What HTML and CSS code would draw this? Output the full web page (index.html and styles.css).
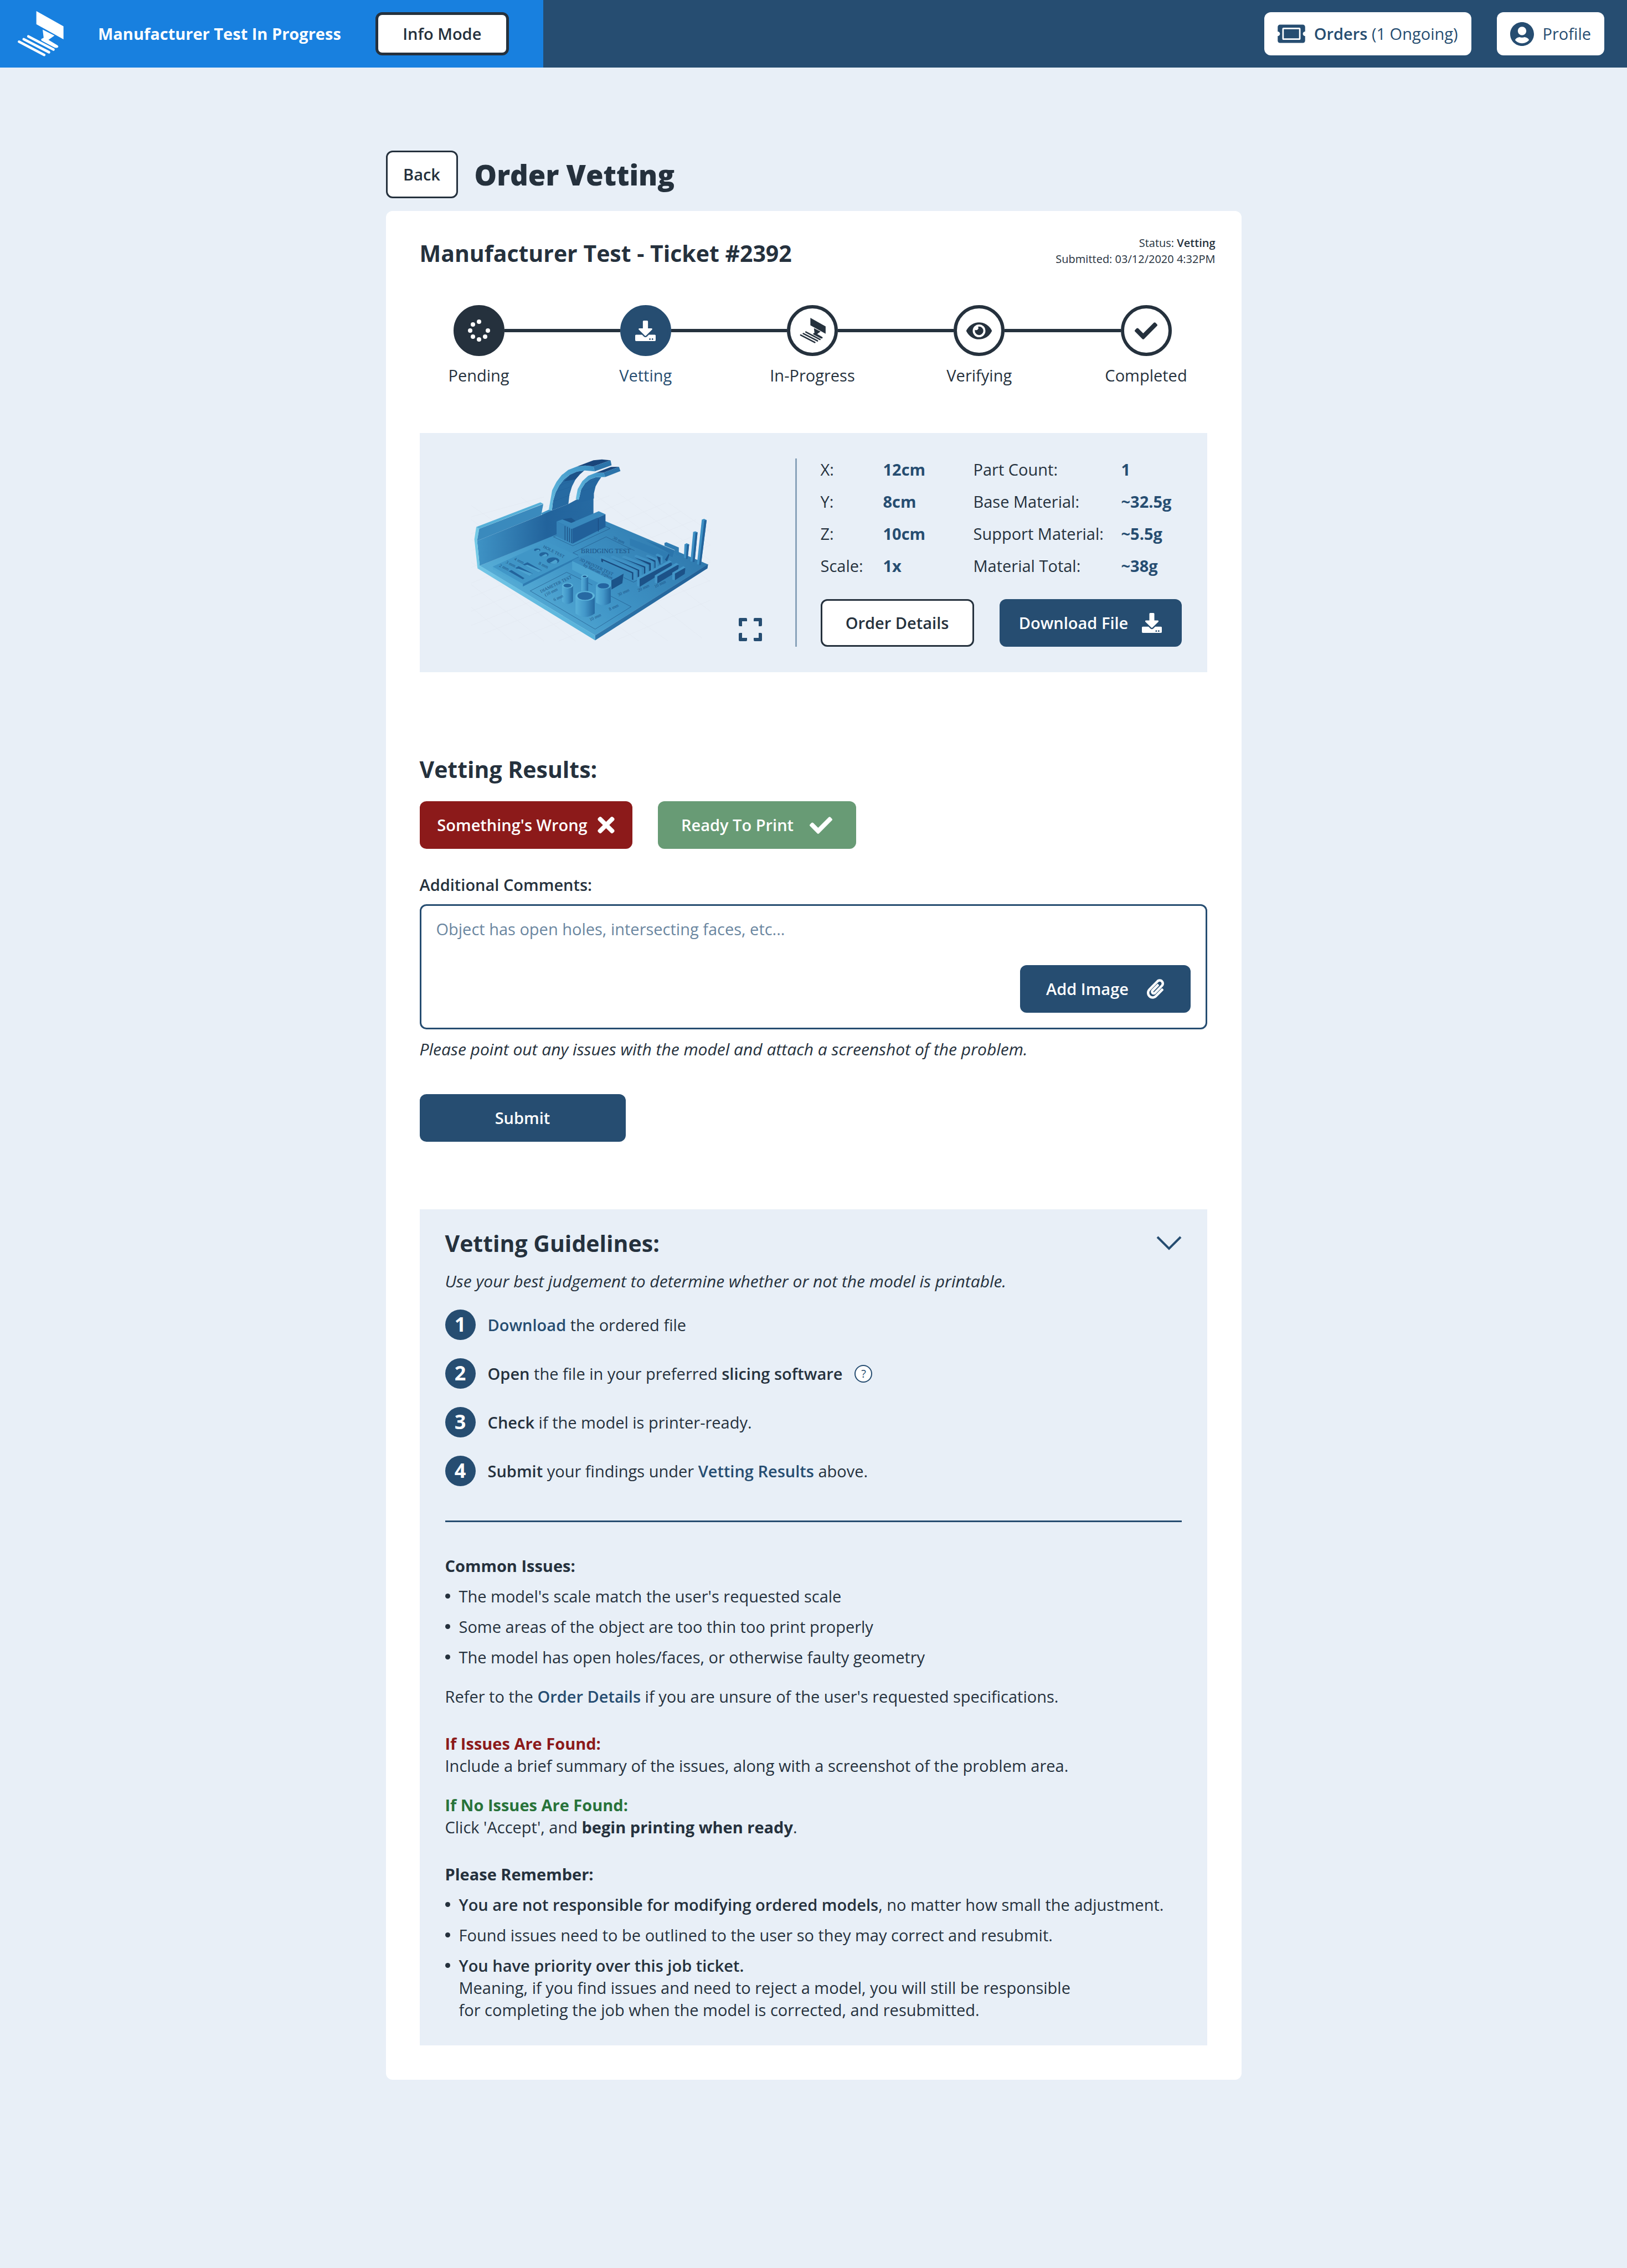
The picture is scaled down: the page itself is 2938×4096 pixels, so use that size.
FILE: index.html
```
<!DOCTYPE html>
<html lang="en">
<head>
<meta charset="utf-8">
<meta name="viewport" content="width=device-width, initial-scale=1">
<title>Order Vetting</title>
<link rel="stylesheet" href="styles.css">
</head>
<body>
<svg class="sprite" aria-hidden="true">
  <symbol id="logo" viewBox="62 40 330 323">
    <path d="M198 40L391 148V241L198 134Z"/>
    <path d="M243 172L327 214L284 245L348 283Q358 291 352 298Q342 304 328 300L238 252Q229 246 234 238L250 230Z"/>
    <g fill="none" stroke="currentColor" stroke-width="18" stroke-linecap="round"><path d="M141 220L320 314"/><path d="M108 240L288 333"/><path d="M75 258L254 352"/></g>
  </symbol>
  <symbol id="download" viewBox="0 0 512 512"><path d="M216 0h80c13.3 0 24 10.7 24 24v168h87.7c17.8 0 26.7 21.5 14.1 34.1L269.7 378.3c-7.5 7.5-19.8 7.5-27.3 0L90.1 226.1c-12.6-12.6-3.7-34.1 14.1-34.1H192V24c0-13.3 10.7-24 24-24zm296 376v112c0 13.3-10.7 24-24 24H24c-13.3 0-24-10.7-24-24V376c0-13.3 10.7-24 24-24h146.7l49 49c20.1 20.1 52.5 20.1 72.6 0l49-49H488c13.3 0 24 10.7 24 24zm-124 88c0-11-9-20-20-20s-20 9-20 20 9 20 20 20 20-9 20-20zm64 0c0-11-9-20-20-20s-20 9-20 20 9 20 20 20 20-9 20-20z"/></symbol>
  <symbol id="check" viewBox="0 0 512 512"><path d="M173.898 439.404l-166.4-166.4c-9.997-9.997-9.997-26.206 0-36.204l36.203-36.204c9.997-9.998 26.207-9.998 36.204 0L192 312.69 432.095 72.596c9.997-9.997 26.207-9.997 36.204 0l36.203 36.204c9.997 9.997 9.997 26.206 0 36.204l-294.4 294.401c-9.998 9.997-26.207 9.997-36.204-.001z"/></symbol>
</svg>

<header class="topbar">
  <div class="mode">
    <svg class="mode-logo" aria-hidden="true"><use href="#logo"/></svg>
    <span class="mode-title">Manufacturer Test In Progress</span>
    <button class="mode-button" type="button">Info Mode</button>
  </div>
  <nav class="account">
    <a class="nav-link" href="#orders">
      <svg class="ticket-icon" viewBox="0 0 576 512" aria-hidden="true"><path d="M128 160h320v192H128V160zm400 96c0 26.51 21.49 48 48 48v96c0 26.51-21.49 48-48 48H48c-26.51 0-48-21.49-48-48v-96c26.51 0 48-21.49 48-48s-21.49-48-48-48v-96c0-26.51 21.49-48 48-48h480c26.51 0 48 21.49 48 48v96c-26.51 0-48 21.49-48 48zm-48-104c0-13.255-10.745-24-24-24H120c-13.255 0-24 10.745-24 24v208c0 13.255 10.745 24 24 24h336c13.255 0 24-10.745 24-24V152z"/></svg>
      <span><b>Orders</b> (1 Ongoing)</span>
    </a>
    <a class="nav-link" href="#profile">
      <svg class="user-icon" viewBox="0 8 496 496" aria-hidden="true"><path d="M248 8C111 8 0 119 0 256s111 248 248 248 248-111 248-248S385 8 248 8zm0 96c48.6 0 88 39.4 88 88s-39.4 88-88 88-88-39.4-88-88 39.4-88 88-88zm0 344c-58.7 0-111.3-26.6-146.5-68.2 18.8-35.4 55.6-59.8 98.5-59.8 2.4 0 4.8.4 7.1 1.1 13 4.2 26.6 6.9 40.9 6.9 14.3 0 28-2.7 40.9-6.9 2.3-.7 4.7-1.1 7.1-1.1 42.9 0 79.7 24.4 98.5 59.8C359.3 421.4 306.7 448 248 448z"/></svg>
      <span>Profile</span>
    </a>
  </nav>
</header>

<main class="page">
  <div class="page-head">
    <button class="button outline back" type="button">Back</button>
    <h1>Order Vetting</h1>
  </div>

  <article class="card">
    <header class="ticket-head">
      <h2>Manufacturer Test - Ticket #2392</h2>
      <p class="ticket-meta">Status: <b>Vetting</b><br>Submitted: 03/12/2020 4:32PM</p>
    </header>

    <ol class="steps">
      <li class="step done">
        <span class="dot"><svg width="42" height="42" viewBox="-21 -21 42 42" aria-hidden="true"><circle cy="-16" r="4"/><circle cx="-11" cy="-11" r="4"/><circle cx="-16" r="4"/><circle cx="-11" cy="11" r="4"/><circle cy="16" r="4"/><circle cx="11" cy="11" r="4"/><circle cx="16" r="4"/></svg></span>
        <span class="step-name">Pending</span>
      </li>
      <li class="step current" aria-current="step">
        <span class="dot"><svg width="37" height="37" aria-hidden="true"><use href="#download"/></svg></span>
        <span class="step-name">Vetting</span>
      </li>
      <li class="step">
        <span class="dot"><svg width="47" height="46" aria-hidden="true"><use href="#logo"/></svg></span>
        <span class="step-name">In-Progress</span>
      </li>
      <li class="step">
        <span class="dot"><svg width="46" height="41" viewBox="0 0 576 512" aria-hidden="true"><path d="M572.52 241.4C518.29 135.59 410.93 64 288 64S57.68 135.64 3.48 241.41a32.35 32.35 0 0 0 0 29.19C57.71 376.41 165.07 448 288 448s230.32-71.64 284.52-177.41a32.35 32.35 0 0 0 0-29.19zM288 400a144 144 0 1 1 144-144 143.93 143.93 0 0 1-144 144zm0-240a95.31 95.31 0 0 0-25.31 3.79 47.85 47.85 0 0 1-66.9 66.9A95.78 95.78 0 1 0 288 160z"/></svg></span>
        <span class="step-name">Verifying</span>
      </li>
      <li class="step">
        <span class="dot"><svg width="41" height="41" aria-hidden="true"><use href="#check"/></svg></span>
        <span class="step-name">Completed</span>
      </li>
    </ol>

    <section class="model">
      <div class="preview">
        <svg class="model-view" viewBox="0 0 438 332" role="img" aria-label="3D model of the ordered part">
          <defs>
            <linearGradient id="gBase" x1="0" y1="0.7" x2="1" y2="0.2"><stop offset="0" stop-color="#5fb6dc"/><stop offset=".45" stop-color="#3f94c6"/><stop offset="1" stop-color="#2d75aa"/></linearGradient>
            <linearGradient id="gWall" x1="0" y1="0" x2="1" y2="0"><stop offset="0" stop-color="#3f93c5"/><stop offset=".6" stop-color="#22639c"/><stop offset="1" stop-color="#266aa2"/></linearGradient>
            <linearGradient id="gArc" x1="0" y1="1" x2="1" y2="0"><stop offset="0" stop-color="#66bde1"/><stop offset="1" stop-color="#3a8fc3"/></linearGradient>
            <linearGradient id="gTube" x1="0" y1="0" x2="1" y2="0"><stop offset="0" stop-color="#58b0d9"/><stop offset=".5" stop-color="#4296c8"/><stop offset="1" stop-color="#2468a0"/></linearGradient>
            <linearGradient id="gEdge" x1="0" y1="0" x2="1" y2="1"><stop offset="0" stop-color="#72c6e6"/><stop offset="1" stop-color="#55b0d9"/></linearGradient>
            <linearGradient id="gSide" x1="0" y1="1" x2="1" y2="0"><stop offset="0" stop-color="#2e78ad"/><stop offset="1" stop-color="#215f96"/></linearGradient>
          </defs>
          <g transform="scale(.3806 .255) translate(-100 -127)">
            <g fill="none" stroke="#dfe4ee" stroke-width="2" opacity=".55">
              <path d="M105 1010L1030 440M105 1110L1100 500M105 1210L1170 560M105 1310L1240 630M160 1370L1240 740M330 1400L1240 860M520 1420L1240 990M800 1410L1240 1130M105 900L880 400M105 780L760 390M105 660L620 380M105 540L450 400"/>
              <path d="M105 560L900 1420M105 700L760 1420M105 860L600 1420M105 1020L450 1420M105 1180L300 1420M105 460L1040 1420M340 400L1200 1400M520 380L1240 1210M680 370L1240 1000M800 370L1240 850M920 400L1240 740M1040 440L1240 650"/>
            </g>
            <path fill="url(#gBase)" d="M145 887L700 545L1228 877L693 1380Z"/>
            <path fill="url(#gEdge)" d="M135 905L145 885L693 1380V1415Z"/>
            <path fill="url(#gSide)" d="M693 1380L1229 875L1226 905L693 1415Z"/>

            <path fill="url(#gWall)" d="M145 887L133 710L437 528L475 497L488 495L566 450L602 420L685 375V545L510 665Z"/>
            <path fill="#74cae6" d="M129 612L143 625L133 710L145 887L135 905L120 700Z"/>
            <path fill="#3a8abd" d="M143 625L447 450L437 528L133 710Z"/>
            <path fill="#56b0d8" d="M129 612L433 438L447 448L143 625Z"/>
            <path fill="#3f93c5" d="M437 514L473 490L488 495L440 526Z"/>
            <path fill="#266aa2" d="M488 495L493 430L505 370L522 320L545 275L573 243L607 220L640 213L620 240L600 275L583 325L571 385L566 450Z"/>
            <path fill="#1c5288" d="M573 243L607 220L640 213L620 240L600 275L545 290Z"/>
            <path fill="url(#gArc)" d="M473 490L489 352L510 292L534 245L565 208L607 184L645 177L685 183L691 218L645 212L607 220L573 243L545 275L522 320L505 370L493 430L488 495Z"/>
            <path fill="#19457a" d="M607 184L685 140L725 134L766 140L685 183L645 177Z"/>
            <path fill="#2c74aa" d="M685 183L766 140L771 175L691 218Z"/>
            <path fill="#2467a0" d="M615 420L627 345L645 303L668 275L697 259L722 259L708 290L695 325L687 375V410L610 440Z"/>
            <path fill="url(#gArc)" d="M601 415L610 345L632 288L660 250L697 228L733 227L741 258L697 259L668 275L645 303L627 345L615 420Z"/>
            <path fill="#19457a" d="M697 228L768 187L806 186L733 227Z"/>
            <path fill="#2c74aa" d="M733 227L806 186L813 216L741 258Z"/>
            <g stroke="#1c5a92" stroke-width="1" fill="none"><path d="M497 430L575 385M508 362L583 325M524 318L600 275M625 362L690 330M645 305L708 280"/></g>

            <path fill="none" stroke="#1d5184" stroke-width="2" d="M510 672L495 682L587 746L764 623L742 608"/>
            <path fill="#3989bd" d="M510 573L538 558L580 583L710 501L742 522L585 625Z"/>
            <path fill="#3583b8" d="M510 573L585 625V731L510 678Z"/>
            <path fill="#21609a" d="M585 625L742 522V612L585 731Z"/>
            <path fill="#1d568d" d="M538 558L580 583L600 570L580 548Z"/>
            <path stroke="#1a4b80" stroke-width="3" d="M550 605V706M561 612V713M571 620V720M581 626V727M708 552V645"/>

            <path fill="#2e7cb2" d="M350 1015L615 820V833L350 1034Z"/>
            <path fill="#4fa8d3" d="M207 893L350 1015V1034L207 910Z"/>
            <path fill="#4096c7" d="M207 893L465 717L615 820L350 1015Z"/>
            <g fill="#22649c"><ellipse cx="418" cy="775" rx="15" ry="11"/><ellipse cx="450" cy="808" rx="22" ry="17"/><ellipse cx="493" cy="850" rx="30" ry="23"/><path d="M372 862L440 920L425 935L350 878Z"/><path d="M330 890L397 943L382 960L314 902Z"/><path d="M296 917L358 975L350 983L282 925Z"/></g>
            <g fill="#4ca3d0"><path d="M424 772q9 5 2 12q-12 3-18-1z"/><path d="M458 802q14 7 4 20q-16 5-26-1z"/><path d="M505 843q16 12 4 28q-20 5-32-4z"/><path d="M372 880L438 922L425 935L358 884Z"/><path d="M330 908L396 944L382 960L318 908Z"/></g>

            <path fill="none" stroke="#1d5184" stroke-width="2" d="M880 780L745 682L588 795L612 812M828 970L875 1003L905 980M680 1023L558 933L385 1065L693 1336L864 1177L765 1100"/>

            <path fill="#2f7cb2" d="M858 693L1043 800L1030 850L858 742Z"/><path fill="#1d568d" d="M1043 800L1045 812L1034 855L1024 845Z"/>
            <path fill="#2a74ab" d="M934 708L1068 780L1060 826L1045 815V798Z"/>
            <path fill="#2f7cb2" d="M1022 725L1031 720L1090 757V808L1078 812L1070 775L1022 745Z"/>

            <g fill="#19497e">
              <path d="M722 832L880 935V990L868 985V940L730 850V868H722Z"/><path d="M770 835L905 912V970L895 975V920Z"/><path d="M822 833L935 895V950L925 955V900Z"/><path d="M880 828L962 870V925L950 930V880Z"/><path d="M935 825L985 852V905L975 908V860Z"/><path d="M985 815L1010 830V875L1000 878Z"/>
            </g>
            <g fill="#3f91c4">
              <path d="M714 820L728 814L888 920V986L874 992V934L714 830Z"/><path d="M768 820L778 815L914 905V965L902 972V916L768 830Z"/><path d="M822 820L832 815L944 882V945L931 955V892L822 830Z"/><path d="M880 815L888 809L968 857V915L957 925V867L880 825Z"/><path d="M935 812L943 807L990 840V900L979 908V850L935 822Z"/><path d="M981 806L989 801L1013 818V870L1003 878V828L981 816Z"/>
            </g>

            <g fill="#1c5288"><path d="M904 975L1045 860L1057 868V895L904 1037Z"/><path d="M988 960L1080 878L1090 885L1085 925L988 1012Z"/><path d="M1071 940L1113 900L1121 905L1118 945L1071 990Z"/></g>
            <g fill="#4396c8"><path d="M891 972L1045 848L1057 858L904 980V1037L891 1030Z"/><path d="M976 955L1078 866L1090 876L988 962V1012L976 1007Z"/><path d="M1059 936L1112 890L1121 900L1071 943V990L1059 985Z"/></g>

            <g fill="#3d8fc3"><path d="M1117 735L1127 727L1139 735L1132 838L1114 830Z"/><path d="M1158 648L1168 643L1179 650L1165 860L1145 855Z"/><path d="M1199 560L1210 554L1222 563L1195 882L1176 876Z"/></g>
            <g fill="#22639b"><path d="M1128 738L1139 735L1132 838L1124 838Z"/><path d="M1169 654L1179 650L1165 860L1155 860Z"/><path d="M1211 566L1222 563L1195 882L1186 882Z"/></g>

            <path fill="#4ba3d0" d="M584 852L770 990V1055L584 915Z"/>
            <path fill="#1b5389" d="M770 990L828 943L822 1010L770 1055Z"/>
            <path fill="#3a8cc0" d="M584 852Q590 838 655 808L828 935Q830 945 770 990Z"/>

            <path fill="url(#gTube)" d="M627 962V1065H660V962Z"/><ellipse cx="643.500" cy="962" rx="16.500" ry="12" fill="#5cb4db"/><ellipse cx="643" cy="962" rx="9" ry="6" fill="#1d568d"/>
            <path fill="url(#gTube)" d="M536 1027V1140Q562 1175 588 1140V1027Z"/><ellipse cx="562" cy="1027" rx="26" ry="20" fill="#5cb4db"/><ellipse cx="562" cy="1027" rx="19" ry="14" fill="#2669a2"/>
            <path fill="url(#gTube)" d="M697 1028V1148Q732 1185 767 1148V1028Z"/><ellipse cx="732" cy="1028" rx="35" ry="25" fill="#4fa6d2"/><ellipse cx="732" cy="1029" rx="27" ry="19" fill="#2364a0"/>
            <path fill="url(#gTube)" d="M600 1100V1225Q645 1275 691 1225V1100Z"/><ellipse cx="645.500" cy="1100" rx="45.500" ry="35" fill="#5cb4db"/><ellipse cx="645" cy="1101" rx="36" ry="28" fill="#2769a3"/>
          </g>
          <g class="engraving">
            <text transform="translate(131 161) rotate(27)">HOLE TEST</text>
            <text class="engraving-large" x="200" y="171">BRIDGING TEST</text>
            <text transform="translate(197 184) rotate(25)">3D PRINTER TEST</text>
            <text transform="translate(204 194) rotate(25)">by Marian Trpkos</text>
            <text transform="translate(128 243) rotate(-26)">DIAMETER TEST</text>
            <text transform="translate(136 249) rotate(-26)">(10 mm</text>
            <text transform="translate(152 258) rotate(-26)">6 mm</text>
            <text transform="translate(217 294) rotate(-26)">10 mm</text>
            <text transform="translate(252 275) rotate(-26)">8 mm</text>
            <text transform="translate(268 249) rotate(-26)">30 mm</text>
            <text transform="translate(304 241) rotate(-26)">20 mm</text>
            <text transform="translate(334 234) rotate(-26)">10 mm</text>
            <text transform="translate(79 183) rotate(25)">4 mm</text>
            <text transform="translate(64 189) rotate(25)">3 mm</text>
            <text transform="translate(52 195) rotate(25)">2 mm</text>
            <text transform="translate(123 191) rotate(25)">8 mm</text>
            <text transform="translate(257 145) rotate(25)">30 mm</text>
          </g>
        </svg>
        <button class="expand" type="button" aria-label="Expand preview">
          <svg width="42" height="42" viewBox="0 0 42 42" aria-hidden="true"><path d="M2 0H13Q15 0 15 2V6H6V15H2Q0 15 0 13V2Q0 0 2 0ZM40 0H29Q27 0 27 2V6H36V15H40Q42 15 42 13V2Q42 0 40 0ZM2 42H13Q15 42 15 40V36H6V27H2Q0 27 0 29V40Q0 42 2 42ZM40 42H29Q27 42 27 40V36H36V27H40Q42 27 42 29V40Q42 42 40 42Z"/></svg>
        </button>
      </div>
      <div class="specs">
        <dl class="spec-grid">
          <dt>X:</dt><dd>12cm</dd><dt>Part Count:</dt><dd>1</dd>
          <dt>Y:</dt><dd>8cm</dd><dt>Base Material:</dt><dd>~32.5g</dd>
          <dt>Z:</dt><dd>10cm</dd><dt>Support Material:</dt><dd>~5.5g</dd>
          <dt>Scale:</dt><dd>1x</dd><dt>Material Total:</dt><dd>~38g</dd>
        </dl>
        <div class="button-row">
          <button class="button outline details" type="button">Order Details</button>
          <button class="button navy download" type="button">Download File <svg width="36" height="36" aria-hidden="true"><use href="#download"/></svg></button>
        </div>
      </div>
    </section>

    <form class="results" id="results">
      <h2>Vetting Results:</h2>
      <div class="button-row">
        <button class="button red" type="button">Something's Wrong <svg width="31" height="44" viewBox="0 0 352 512" aria-hidden="true"><path d="M242.72 256l100.07-100.07c12.28-12.28 12.28-32.19 0-44.48l-22.24-22.24c-12.28-12.28-32.19-12.28-44.48 0L176 189.28 75.93 89.21c-12.28-12.28-32.19-12.28-44.48 0L9.21 111.45c-12.28 12.28-12.28 32.19 0 44.48L109.28 256 9.21 356.07c-12.28 12.28-12.28 32.19 0 44.48l22.24 22.24c12.28 12.28 32.2 12.28 44.48 0L176 322.72l100.07 100.07c12.28 12.28 32.2 12.28 44.48 0l22.24-22.24c12.28-12.28 12.28-32.19 0-44.48L242.72 256z"/></svg></button>
        <button class="button green" type="button">Ready To Print <svg width="41" height="41" aria-hidden="true"><use href="#check"/></svg></button>
      </div>
      <label class="comments-label" for="comments">Additional Comments:</label>
      <div class="comments">
        <textarea id="comments" placeholder="Object has open holes, intersecting faces, etc..."></textarea>
        <button class="button navy attach" type="button">Add Image <svg width="31" height="36" viewBox="0 0 448 512" aria-hidden="true"><path d="M43.246 466.142c-58.43-60.289-57.341-157.511 1.386-217.581L254.392 34c44.316-45.332 116.351-45.336 160.671 0 43.89 44.894 43.943 117.329 0 162.276L232.214 383.128c-29.855 30.537-78.633 30.111-107.982-.998-28.275-29.97-27.368-77.473 1.452-106.953l143.743-146.835c6.182-6.314 16.312-6.422 22.626-.241l22.861 22.379c6.315 6.182 6.422 16.312.241 22.626L171.427 319.927c-4.932 5.045-5.236 13.428-.648 18.292 4.372 4.634 11.245 4.711 15.688.165l182.849-186.851c19.613-20.062 19.613-52.725-.011-72.798-19.189-19.627-49.957-19.637-69.154 0L90.39 293.295c-34.763 35.56-35.299 93.12-1.191 128.313 34.01 35.093 88.985 35.137 123.058.286l172.06-175.999c6.177-6.319 16.307-6.433 22.626-.256l22.877 22.364c6.319 6.177 6.434 16.307.256 22.626l-172.06 175.998c-59.576 60.938-155.943 60.216-214.77-.485z"/></svg></button>
      </div>
      <p class="hint">Please point out any issues with the model and attach a screenshot of the problem.</p>
      <button class="button navy submit" type="submit">Submit</button>
    </form>

    <section class="guide">
      <header class="guide-head">
        <h2>Vetting Guidelines:</h2>
        <button class="collapse" type="button" aria-label="Collapse guidelines"><svg width="46" height="28" viewBox="0 0 46 28" aria-hidden="true"><path d="M2 3L23 24L44 3" fill="none" stroke="currentColor" stroke-width="4"/></svg></button>
      </header>
      <p class="guide-intro">Use your best judgement to determine whether or not the model is printable.</p>
      <ol class="guide-steps">
        <li><span class="number">1</span><span><a href="#download-file">Download</a> the ordered file</span></li>
        <li><span class="number">2</span><span><b>Open</b> the file in your preferred <b>slicing software</b></span><button class="help" type="button" aria-label="About slicing software">?</button></li>
        <li><span class="number">3</span><span><b>Check</b> if the model is printer-ready.</span></li>
        <li><span class="number">4</span><span><b>Submit</b> your findings under <a href="#results">Vetting Results</a> above.</span></li>
      </ol>
      <hr>
      <h3>Common Issues:</h3>
      <ul class="bullets">
        <li>The model's scale match the user's requested scale</li>
        <li>Some areas of the object are too thin too print properly</li>
        <li>The model has open holes/faces, or otherwise faulty geometry</li>
      </ul>
      <p class="refer">Refer to the <a href="#order-details">Order Details</a> if you are unsure of the user's requested specifications.</p>
      <h3 class="found">If Issues Are Found:</h3>
      <p>Include a brief summary of the issues, along with a screenshot of the problem area.</p>
      <h3 class="clear">If No Issues Are Found:</h3>
      <p>Click 'Accept', and <strong>begin printing when ready</strong>.</p>
      <h3 class="remember">Please Remember:</h3>
      <ul class="bullets">
        <li><span><b>You are not responsible for modifying ordered models</b>, no matter how small the adjustment.</span></li>
        <li>Found issues need to be outlined to the user so they may correct and resubmit.</li>
        <li><span><b>You have priority over this job ticket.</b><br>Meaning, if you find issues and need to reject a model, you will still be responsible<br>for completing the job when the model is corrected, and resubmitted.</span></li>
      </ul>
    </section>
  </article>
</main>
</body>
</html>
```
FILE: styles.css
```
:root {
  --ink: #25313d;
  --navy: #264d71;
  --pale: #e8eff7;
  --gap: 46px;
}

* { box-sizing: border-box; }

body {
  margin: 0;
  min-height: 100vh;
  background: var(--pale);
  color: var(--ink);
  font: 400 29px/40px "Open Sans", "Noto Sans", sans-serif;
}

h1, h2, h3, p, ol, ul, dl, dd { margin: 0; padding: 0; }
ol, ul { list-style: none; }
svg { display: block; flex: none; fill: currentColor; }
b { font-weight: 600; }
h2 { font-size: 41px; line-height: 60px; font-weight: 700; }
h3 { font-size: 29px; line-height: 40px; font-weight: 700; }
a { color: var(--navy); font-weight: 600; text-decoration: none; }
button { font: inherit; color: inherit; cursor: pointer; }
.sprite { position: absolute; width: 0; height: 0; }

/* Top bar */
.topbar { display: flex; justify-content: space-between; background: var(--navy); }
.mode {
  display: flex;
  align-items: center;
  padding: 22px 62px 22px 31px;
  background: #1880df;
  color: #fff;
}
.mode-logo { width: 84px; height: 82px; margin: -2px 62px -2px 0; }
.mode-title { font-weight: 700; }
.mode-button {
  width: 241px;
  height: 78px;
  margin-left: 62px;
  border: 5px solid var(--ink);
  border-radius: 12px;
  background: #fff;
  color: var(--ink);
  font-weight: 600;
}
.account { display: flex; align-items: center; gap: var(--gap); padding-right: 41px; }
.nav-link {
  display: flex;
  align-items: center;
  gap: 16px;
  height: 78px;
  padding: 0 24px;
  border-radius: 12px;
  background: #fff;
  font-weight: 400;
}
.ticket-icon { width: 50px; height: 44px; }
.user-icon { width: 43px; height: 43px; }

/* Page */
.page { max-width: 1545px; margin: 0 auto; padding: 150px 0; }
.page-head { display: flex; align-items: center; gap: 30px; margin-bottom: 23px; }
h1 { font-size: 51px; line-height: 86px; font-weight: 800; }

.button {
  display: flex;
  align-items: center;
  justify-content: center;
  height: 86px;
  padding: 0;
  border: 0;
  border-radius: 12px;
  color: #fff;
  font-weight: 600;
}
.outline { border: 3px solid var(--ink); background: #fff; color: var(--ink); }
.navy { background: var(--navy); }
.red { gap: 18px; width: 384px; background: #8c1a1a; }
.green { gap: 29px; width: 358px; background: #689b75; }
.back { width: 130px; }
.button-row { display: flex; gap: var(--gap); }

.card { padding: 43px 62px 62px 61px; border-radius: 12px; background: #fff; }

.ticket-head { display: flex; justify-content: space-between; align-items: flex-end; margin-right: -15px; }
.ticket-head h2 { line-height: 50px; }
.ticket-meta { font-size: 20px; line-height: 29px; text-align: right; }

/* Progress steps */
.steps { display: flex; margin: 69px 64px 84px 61px; }
.step {
  display: grid;
  grid-template-columns: 92px 1fr;
  align-items: center;
  row-gap: 15px;
  flex: 1;
}
.step:last-child { flex: none; grid-template-columns: 92px; }
.step:not(:last-child)::after {
  content: "";
  grid-area: 1 / 2;
  height: 6px;
  background: var(--ink);
}
.dot {
  display: grid;
  place-items: center;
  height: 92px;
  border: 6px solid var(--ink);
  border-radius: 50%;
}
.done .dot { background: var(--ink); color: #fff; }
.current .dot { border-color: var(--navy); background: var(--navy); color: #fff; }
.current .step-name { color: var(--navy); }
.step-name { grid-area: 2 / 1; justify-self: center; white-space: nowrap; }

/* Ordered model */
.model { display: flex; padding: 46px 46px 46px 46px; background: var(--pale); }
.preview {
  display: flex;
  flex: 1;
  justify-content: space-between;
  align-items: flex-end;
  padding: 0 60px 0 45px;
}
.model-view { width: 438px; height: 332px; align-self: flex-start; }
.engraving { fill: #1c5286; font: 8px "Liberation Serif", serif; }
.engraving-large { font-size: 12px; }
.expand, .collapse { padding: 0; border: 0; background: none; color: var(--navy); }
.expand { margin-bottom: 10px; }
.specs { padding-left: 43px; border-left: 3px solid #8aa3ba; }
.spec-grid { display: grid; grid-template-columns: 113px 163px 267px auto; row-gap: 18px; margin-bottom: 40px; }
.spec-grid dd { color: var(--navy); font-weight: 700; }
.details { width: 277px; }
.download { gap: 25px; width: 329px; }

/* Results form */
.results { margin: 145px 0 122px; }
.results h2 { margin-bottom: 28px; }
.comments-label { display: block; margin: 45px 0 15px; font-weight: 600; }
.comments { display: grid; }
.comments textarea {
  grid-area: 1 / 1;
  height: 226px;
  padding: 22px 27px;
  border: 3px solid var(--navy);
  border-radius: 12px;
  background: #fff;
  color: var(--ink);
  font: inherit;
  resize: none;
}
.comments textarea::placeholder { color: #6a86a0; opacity: 1; }
.attach { grid-area: 1 / 1; place-self: end; gap: 33px; width: 308px; margin: 30px; }
.hint, .guide-intro { font-size: 30px; font-style: italic; }
.hint { margin: 16px 0 61px; }
.submit { width: 372px; }

/* Guidelines */
.guide { padding: 31px 46px 44px; background: var(--pale); }
.guide-head { display: flex; justify-content: space-between; align-items: center; }
.guide-intro { margin: 19px 0 31px; }
.guide-steps { display: grid; row-gap: 33px; }
.guide-steps li { display: flex; align-items: center; gap: 22px; }
.number {
  width: 55px;
  height: 55px;
  border-radius: 50%;
  background: var(--navy);
  color: #fff;
  font-size: 36px;
  line-height: 54px;
  font-weight: 700;
  text-align: center;
}
.help {
  width: 32px;
  height: 32px;
  padding: 0;
  border: 2px solid var(--navy);
  border-radius: 50%;
  background: #fff;
  color: var(--navy);
  font-size: 20px;
  line-height: 28px;
}
.guide hr { height: 3px; margin: 62px 0 59px; border: 0; background: var(--navy); }
.bullets { display: grid; row-gap: 15px; margin-top: 15px; }
.bullets li { display: flex; }
.bullets li::before {
  content: "";
  flex: none;
  width: 9px;
  height: 9px;
  margin: 15px 16px 0 0;
  border-radius: 50%;
  background: var(--ink);
}
.refer { margin: 31px 0 45px; }
.found { color: #8c1a1a; }
.clear { margin-top: 31px; color: #28733a; }
.remember { margin-top: 45px; }
```
